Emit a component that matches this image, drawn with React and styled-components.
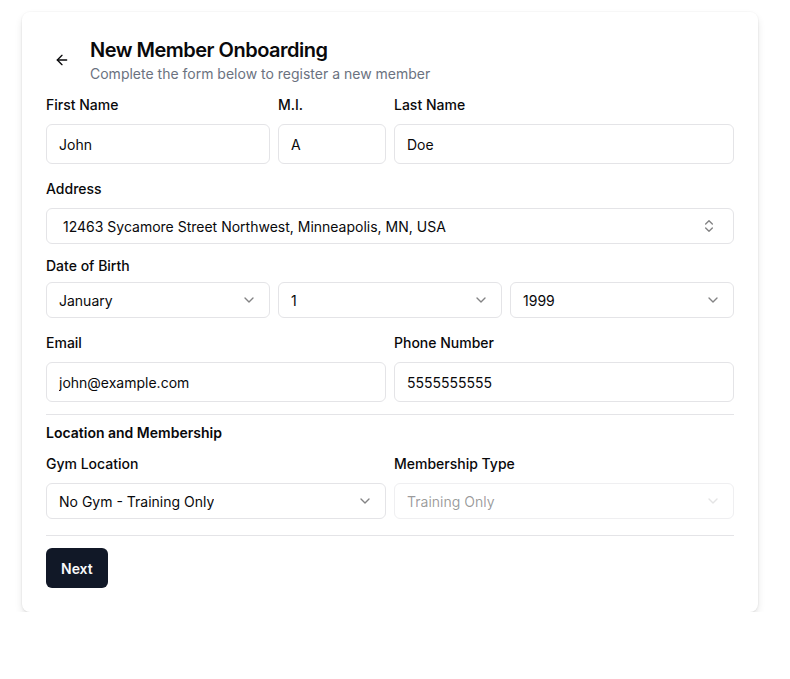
import React from "react";
import styled, { createGlobalStyle } from "styled-components";
import { ArrowLeft, ChevronDown, ChevronsUpDown } from "lucide-react";

const Global = createGlobalStyle`
  html, body { margin: 0; padding: 0; background: #ffffff; }
  body { font-family: Inter, "Noto Sans", sans-serif; color: #09090b; -webkit-font-smoothing: antialiased; }
  * { box-sizing: border-box; }
`;

const Page = styled.div`
  padding: 12px 0 0 22px;
`;

const Card = styled.div`
  width: 736px;
  background: #fff;
  border-radius: 8px;
  padding: 24px;
  box-shadow: 0 4px 8px -1px rgba(0,0,0,0.12), 0 2px 4px -2px rgba(0,0,0,0.1), 0 0 0 1px rgba(0,0,0,0.02);
`;

const Header = styled.div`
  display: flex;
  align-items: center;
  gap: 12px;
  margin-bottom: 11px;
`;

const IconButton = styled.button`
  width: 32px;
  height: 32px;
  border: none;
  background: transparent;
  display: flex;
  align-items: center;
  justify-content: center;
  padding: 0;
  color: #09090b;
  border-radius: 6px;
  cursor: pointer;
`;

const TitleBlock = styled.div`
  display: flex;
  flex-direction: column;
`;

const Title = styled.h1`
  margin: 0;
  font-size: 20px;
  line-height: 28px;
  font-weight: 600;
  letter-spacing: -0.5px;
`;

const Subtitle = styled.p`
  margin: 0;
  font-size: 14px;
  line-height: 20px;
  color: #6b7280;
`;

const Grid = styled.div`
  display: grid;
  grid-template-columns: ${(p) => p.$cols};
  column-gap: 8px;
  margin-top: ${(p) => p.$mt || 0}px;
`;

const Field = styled.div`
  display: flex;
  flex-direction: column;
  min-width: 0;
`;

const Label = styled.label`
  font-size: 14px;
  line-height: 20px;
  font-weight: 500;
  margin-bottom: ${(p) => p.$gap ?? 9}px;
`;

const Control = styled.div`
  height: ${(p) => p.$h}px;
  border: 1px solid ${(p) => (p.$disabled ? "#efeff1" : "#e4e4e7")};
  border-radius: 6px;
  background: #fff;
  display: flex;
  align-items: center;
  justify-content: space-between;
  padding: 0 ${(p) => p.$pr ?? 12}px 0 ${(p) => p.$pl ?? 12}px;
  font-size: 14px;
  color: ${(p) => (p.$disabled ? "rgba(9,9,11,0.42)" : "#09090b")};
  svg { flex: none; opacity: ${(p) => (p.$disabled ? 0.25 : 0.5)}; }
`;

const Value = styled.span`
  white-space: nowrap;
  overflow: hidden;
`;

const Separator = styled.hr`
  border: none;
  height: 1px;
  background: #e4e4e7;
  margin: ${(p) => p.$mt}px 0 ${(p) => p.$mb}px;
`;

const SectionTitle = styled.h3`
  margin: 0 0 11px;
  font-size: 14px;
  line-height: 20px;
  font-weight: 600;
`;

const PrimaryButton = styled.button`
  height: 40px;
  padding: 0 15px;
  border: none;
  border-radius: 6px;
  background: #111827;
  color: #f9fafb;
  font-family: inherit;
  font-size: 14px;
  font-weight: 600;
  cursor: pointer;
`;

function Input({ h = 40, value }) {
  return (
    <Control $h={h}>
      <Value>{value}</Value>
    </Control>
  );
}

function Select({ h = 36, value, disabled, icon = "down", pl, pr }) {
  return (
    <Control $h={h} $disabled={disabled} $pl={pl} $pr={pr}>
      <Value>{value}</Value>
      {icon === "updown" ? <ChevronsUpDown size={16} /> : <ChevronDown size={16} />}
    </Control>
  );
}

export default function App() {
  return (
    <Page>
      <Global />
      <Card>
        <Header>
          <IconButton aria-label="Back">
            <ArrowLeft size={16} />
          </IconButton>
          <TitleBlock>
            <Title>New Member Onboarding</Title>
            <Subtitle>Complete the form below to register a new member</Subtitle>
          </TitleBlock>
        </Header>

        <Grid $cols="224px 108px 1fr">
          <Field>
            <Label>First Name</Label>
            <Input value="John" />
          </Field>
          <Field>
            <Label>M.I.</Label>
            <Input value="A" />
          </Field>
          <Field>
            <Label>Last Name</Label>
            <Input value="Doe" />
          </Field>
        </Grid>

        <Grid $cols="1fr" $mt={15}>
          <Field>
            <Label>Address</Label>
            <Select
              value="12463 Sycamore Street Northwest, Minneapolis, MN, USA"
              icon="updown"
              pl={16}
              pr={16}
            />
          </Field>
        </Grid>

        <Grid $cols="1fr 1fr 1fr" $mt={12}>
          <Field>
            <Label $gap={6}>Date of Birth</Label>
            <Select value="January" />
          </Field>
          <Field>
            <Label $gap={6}>&nbsp;</Label>
            <Select value="1" />
          </Field>
          <Field>
            <Label $gap={6}>&nbsp;</Label>
            <Select value="1999" />
          </Field>
        </Grid>

        <Grid $cols="1fr 1fr" $mt={15}>
          <Field>
            <Label>Email</Label>
            <Input value="john@example.com" />
          </Field>
          <Field>
            <Label>Phone Number</Label>
            <Input value="5555555555" />
          </Field>
        </Grid>

        <Separator $mt={12} $mb={8} />

        <SectionTitle>Location and Membership</SectionTitle>

        <Grid $cols="1fr 1fr">
          <Field>
            <Label>Gym Location</Label>
            <Select value="No Gym - Training Only" />
          </Field>
          <Field>
            <Label>Membership Type</Label>
            <Select value="Training Only" disabled />
          </Field>
        </Grid>

        <Separator $mt={16} $mb={12} />

        <PrimaryButton>Next</PrimaryButton>
      </Card>
    </Page>
  );
}
